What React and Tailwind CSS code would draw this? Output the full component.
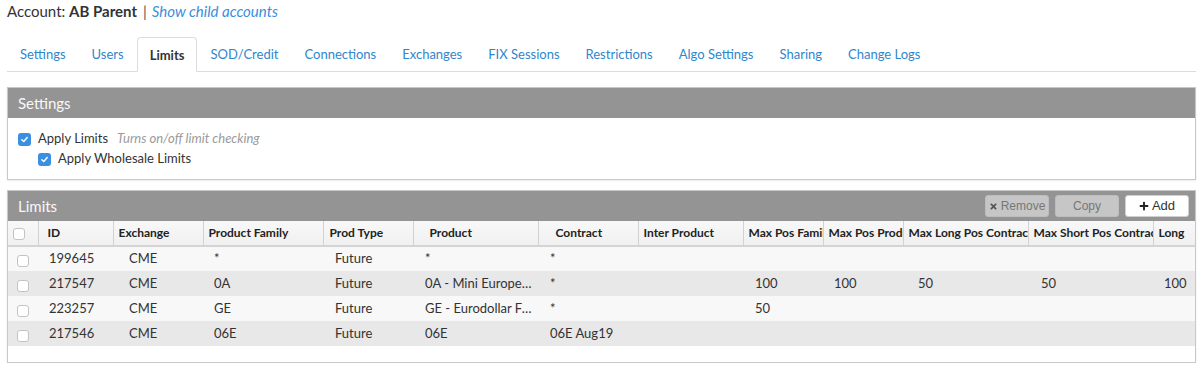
import React from "react";
import { FaTimes, FaPlus } from "react-icons/fa";

const tabs = ["Settings", "Users", "Limits", "SOD/Credit", "Connections", "Exchanges", "FIX Sessions", "Restrictions", "Algo Settings", "Sharing", "Change Logs"];

const cols = [
  { key: "cb", label: "", w: 30, hp: 0, bp: 0 },
  { key: "id", label: "ID", w: 75, hp: 9, bp: 11 },
  { key: "ex", label: "Exchange", w: 90, hp: 5, bp: 16 },
  { key: "pf", label: "Product Family", w: 120, hp: 5, bp: 11 },
  { key: "pt", label: "Prod Type", w: 90, hp: 6, bp: 12 },
  { key: "pr", label: "Product", w: 125, hp: 16, bp: 12 },
  { key: "co", label: "Contract", w: 100, hp: 17, bp: 12 },
  { key: "ip", label: "Inter Product", w: 105, hp: 5, bp: 12 },
  { key: "mpf", label: "Max Pos Family", w: 80, hp: 5, bp: 12 },
  { key: "mpp", label: "Max Pos Product", w: 80, hp: 5, bp: 11 },
  { key: "mlc", label: "Max Long Pos Contract", w: 125, hp: 5, bp: 15 },
  { key: "msc", label: "Max Short Pos Contract", w: 125, hp: 5, bp: 13 },
  { key: "lg", label: "Long", w: 80, hp: 5, bp: 11 },
];

const rows = [
  { id: "199645", ex: "CME", pf: "*", pt: "Future", pr: "*", co: "*", ip: "", mpf: "", mpp: "", mlc: "", msc: "", lg: "" },
  { id: "217547", ex: "CME", pf: "0A", pt: "Future", pr: "0A - Mini European Dollar Futures", co: "*", ip: "", mpf: "100", mpp: "100", mlc: "50", msc: "50", lg: "100" },
  { id: "223257", ex: "CME", pf: "GE", pt: "Future", pr: "GE - Eurodollar Futures", co: "*", ip: "", mpf: "50", mpp: "", mlc: "", msc: "", lg: "" },
  { id: "217546", ex: "CME", pf: "06E", pt: "Future", pr: "06E", co: "06E Aug19", ip: "", mpf: "", mpp: "", mlc: "", msc: "", lg: "" },
];

function BlueCheck() {
  return (
    <span className="inline-flex h-[13px] w-[13px] items-center justify-center rounded-[3px] bg-[#3b8fe2]">
      <svg width="9" height="9" viewBox="0 0 10 10">
        <path d="M2 5.2 L4.2 7.3 L8 2.8" fill="none" stroke="#fff" strokeWidth="1.6" strokeLinecap="round" strokeLinejoin="round" />
      </svg>
    </span>
  );
}

function EmptyBox() {
  return <span className="inline-block h-[12px] w-[12px] rounded-[3px] border border-[#c3c3c3] bg-white" />;
}

export default function App() {
  return (
    <div className="w-[1204px] bg-white pl-[7px] pr-[8px] text-[#333]" style={{ fontFamily: "Lato, 'Noto Sans', sans-serif" }}>
      <div className="flex h-[22px] items-center text-[15px] leading-none">
        <span>Account:&nbsp;</span>
        <span className="font-bold">AB Parent</span>
        <span className="ml-[6px] mr-[5px] text-[#555]">|</span>
        <span className="italic text-[#3a8edb]">Show child accounts</span>
      </div>
      <div className="mt-[15px] flex h-[35px] border-b border-[#dcdcdc]">
        {tabs.map((t) => (
          <div
            key={t}
            className={
              t === "Limits"
                ? "mb-[-1px] flex items-center rounded-t-[4px] border border-b-white border-[#dcdcdc] bg-white px-[12px] pt-[2px] text-[13px] font-bold text-[#333]"
                : "flex items-center border border-transparent px-[12px] pt-[2px] text-[13px] text-[#2f86cc]"
            }
          >
            {t}
          </div>
        ))}
      </div>

      <div className="mt-[15px] border border-[#c8c8c8] shadow-[0_1px_2px_rgba(0,0,0,0.08)]">
        <div className="flex h-[30px] items-center bg-[#949494] pl-[10px] text-[15px] text-[#f8f8f8]">Settings</div>
        <div className="pb-[10px] pl-[10px] pt-[11px] text-[13px]">
          <div className="flex h-[20px] items-center">
            <BlueCheck />
            <span className="ml-[7px]">Apply Limits</span>
            <span className="ml-[9px] text-[13px] italic text-[#9a9a9a]">Turns on/off limit checking</span>
          </div>
          <div className="flex h-[20px] items-center pl-[20px]">
            <BlueCheck />
            <span className="ml-[7px]">Apply Wholesale Limits</span>
          </div>
        </div>
      </div>

      <div className="mt-[10px] overflow-hidden border border-[#c8c8c8] shadow-[0_1px_2px_rgba(0,0,0,0.08)]">
        <div className="flex h-[30px] items-center bg-[#949494] pl-[10px] pr-[6px]">
          <span className="text-[15px] text-[#f8f8f8]">Limits</span>
          <div className="ml-auto flex gap-[6px]" style={{ fontFamily: "'Liberation Sans', Arial, sans-serif" }}>
            <button className="flex h-[22px] w-[64px] items-center justify-center gap-[3px] rounded-[3px] border border-[#bdbdbd] bg-[#c6c6c6] text-[12px] text-[#777]">
              <FaTimes className="text-[9px] text-[#555]" />
              Remove
            </button>
            <button className="flex h-[22px] w-[64px] items-center justify-center rounded-[3px] border border-[#bdbdbd] bg-[#c6c6c6] text-[12px] text-[#777]">
              Copy
            </button>
            <button className="flex h-[22px] w-[64px] items-center justify-center gap-[3px] rounded-[3px] border border-[#cfcfcf] bg-white text-[13px] text-[#333]">
              <FaPlus className="text-[10px] text-[#222]" />
              Add
            </button>
          </div>
        </div>
        <div className="overflow-hidden">
          <table className="table-fixed border-collapse" style={{ width: cols.reduce((a, c) => a + c.w, 0) }}>
            <colgroup>
              {cols.map((c) => (
                <col key={c.key} style={{ width: c.w }} />
              ))}
            </colgroup>
            <thead>
              <tr className="h-[25px] bg-gradient-to-b from-[#f8f8f8] to-[#f0f0f0]">
                {cols.map((c, i) => (
                  <th
                    key={c.key}
                    className={`overflow-hidden whitespace-nowrap border-b-2 border-b-[#d4d4d4] text-left text-[12px] font-bold text-[#222] ${i < cols.length - 1 ? "border-r border-r-[#d2d2d2]" : ""}`}
                    style={{ paddingLeft: c.hp, paddingRight: 0 }}
                  >
                    {c.key === "cb" ? (
                      <span className="ml-[5px] mt-[2px] flex">
                        <EmptyBox />
                      </span>
                    ) : (
                      c.label
                    )}
                  </th>
                ))}
              </tr>
            </thead>
            <tbody>
              {rows.map((r, ri) => (
                <tr key={r.id} className={`h-[25px] ${ri % 2 === 0 ? "bg-[#f8f8f8]" : "bg-[#e8e8e8]"}`}>
                  {cols.map((c) => (
                    <td
                      key={c.key}
                      className="overflow-hidden text-ellipsis whitespace-nowrap text-left text-[13px] text-[#333]"
                      style={{ paddingLeft: c.bp, paddingRight: 4 }}
                    >
                      {c.key === "cb" ? (
                        <span className="ml-[9px] mt-[4px] flex">
                          <EmptyBox />
                        </span>
                      ) : (
                        r[c.key]
                      )}
                    </td>
                  ))}
                </tr>
              ))}
            </tbody>
          </table>
        </div>
        <div className="h-[16px] bg-white" />
      </div>
    </div>
  );
}
